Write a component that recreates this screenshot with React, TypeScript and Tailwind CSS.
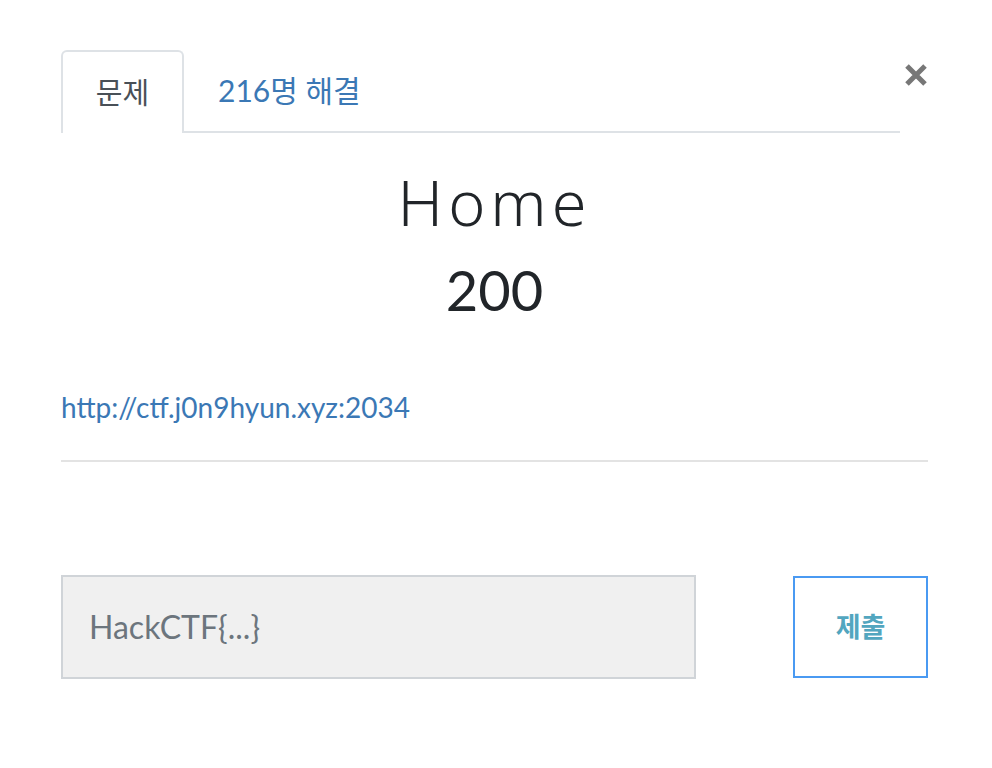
export default function App() {
  return (
    <div
      className="min-h-screen w-full bg-white"
      style={{ fontFamily: 'Lato, "Noto Sans CJK KR", sans-serif' }}
    >
      <div className="pl-[61px] pr-[64px] pt-[50px]">
        <div className="flex items-start">
          <div className="flex flex-1 border-b-2 border-[#dee2e6]">
            <div className="-mb-[2px] flex h-[83px] w-[123px] items-center justify-center rounded-t-md border-2 border-b-0 border-[#dee2e6] bg-white text-[29px] text-[#495057]">
              문제
            </div>
            <div className="flex h-[81px] items-center pl-[34px] text-[30px] text-[#3b78b5]">
              216명 해결
            </div>
          </div>
          <button className="ml-[3px] mt-[13px] flex h-[24px] w-[25px] items-center justify-center text-[#777]">
            <svg width="24" height="24" viewBox="0 0 24 24">
              <path d="M3 3 L21 21 M21 3 L3 21" stroke="currentColor" strokeWidth="5" />
            </svg>
          </button>
        </div>

        <div className="mt-[29px] flex flex-col items-center text-[#212529]">
          <div
            className="text-[63px] leading-[80px] tracking-[5px]"
            style={{ fontFamily: '"Noto Sans", sans-serif', fontWeight: 300 }}
          >
            Home
          </div>
          <div className="mt-[12px] text-[56px] leading-[72px]">200</div>
        </div>

        <div className="mt-[64px] text-[28px] leading-[34px] text-[#3b78b5]">
          http://ctf.j0n9hyun.xyz:2034
        </div>

        <div className="mt-[36px] h-[2px] w-full bg-[#e3e3e3]" />

        <div className="mt-[113px] flex items-center justify-between">
          <div className="flex h-[104px] w-[635px] items-center border-2 border-[#d0d4d8] bg-[#f0f0f0] pl-[26px] text-[32px] text-[#6c757d]">
            HackCTF{"{...}"}
          </div>
          <button className="flex h-[102px] w-[135px] items-center justify-center border-2 border-[#4a9af2] bg-white text-[27px] font-bold text-[#52a6bf]">
            제출
          </button>
        </div>
      </div>
    </div>
  );
}
